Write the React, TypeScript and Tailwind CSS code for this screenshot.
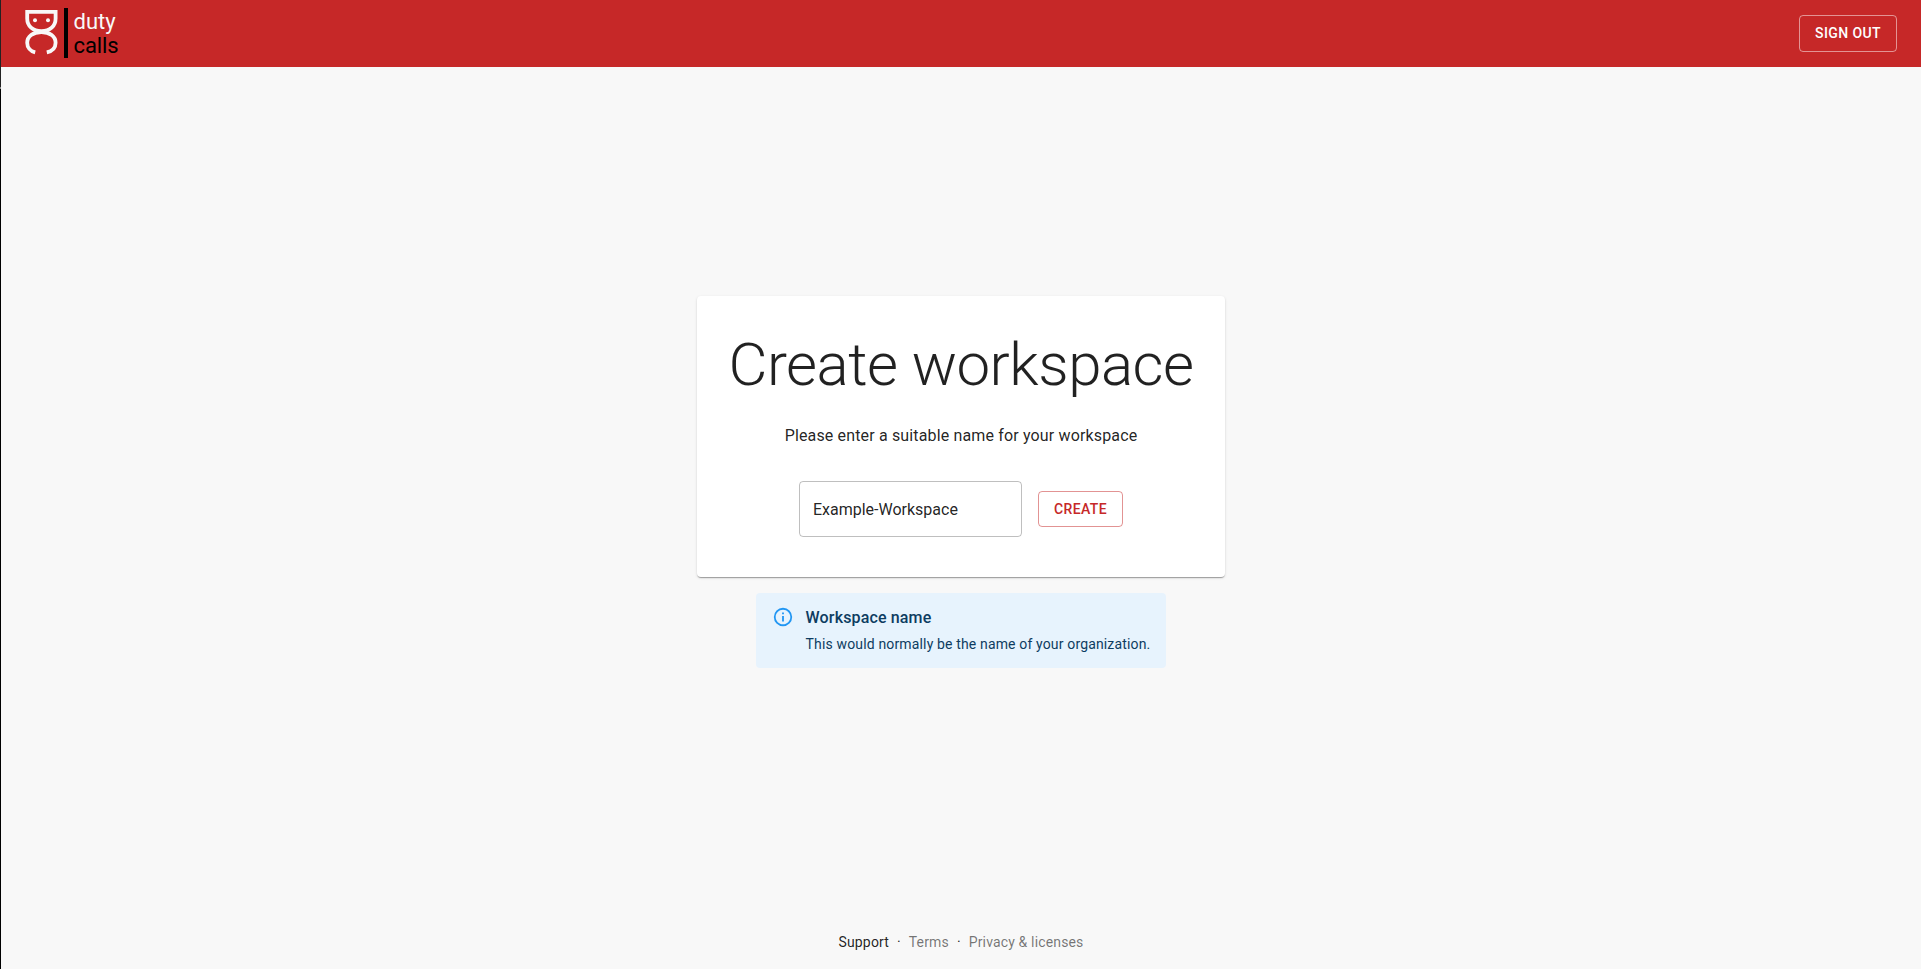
import React from "react";

function Logo() {
  return (
    <div className="flex items-start">
      <svg width="33" height="46" viewBox="0 0 33 46" fill="none" stroke="#f8f8f8" strokeWidth="3.8" aria-hidden="true">
        <path d="M2.2 1.9H30.6V8.5C30.6 16 25 21.2 16.4 21.2C7.8 21.2 2.2 16 2.2 8.5Z" />
        <path d="M10.2 42.3C5.2 41 2.2 37.2 2.2 32.7C2.2 26.5 8 22 16.4 22C24.8 22 30.6 26.5 30.6 32.7C30.6 37.2 27.6 41 21.8 42.3" />
        <circle cx="10" cy="10.3" r="2" fill="#f8f8f8" stroke="none" />
        <circle cx="23" cy="10.3" r="2" fill="#f8f8f8" stroke="none" />
      </svg>
      <div className="-mt-0.5 ml-1.5 h-[50px] w-1 bg-black" />
      <div className="ml-[5.5px] flex flex-col text-[22px] leading-6">
        <span className="text-[#f8f8f8]">duty</span>
        <span className="text-black tracking-[-0.005em]">calls</span>
      </div>
    </div>
  );
}

function InfoIcon() {
  return (
    <svg width="22" height="22" viewBox="0 0 24 24" fill="#2196f3" aria-hidden="true">
      <path d="M11,7H13V9H11V7M11,11H13V17H11V11M12,2A10,10 0 0,0 2,12A10,10 0 0,0 12,22A10,10 0 0,0 22,12A10,10 0 0,0 12,2M12,20C7.59,20 4,16.41 4,12C4,7.59 7.59,4 12,4C16.41,4 20,7.59 20,12C20,16.41 16.41,20 12,20Z" />
    </svg>
  );
}

const button =
  "rounded border px-[15px] py-[5px] text-sm font-medium uppercase leading-[24.5px] tracking-[0.02857em]";

export default function App() {
  return (
    <div className="flex h-[969px] w-[1921px] overflow-hidden bg-[#f8f8f8] font-['Roboto',sans-serif] text-black/87">
      <div className="flex w-px shrink-0 flex-col bg-black">
        <div className="h-[87px] bg-[#222222]" />
        <div className="h-0.5 bg-[#888888]" />
      </div>
      <div className="flex flex-1 flex-col">
        <header className="flex h-[67px] shrink-0 items-center justify-between bg-[#c62828] px-6">
          <Logo />
          <button className={`${button} border-white/50 text-white`}>Sign out</button>
        </header>
        <main className="flex flex-1 flex-col items-center pt-[229px]">
          <section className="flex h-[281px] w-[528px] flex-col items-center rounded bg-white pt-[33px] shadow-[0px_2px_1px_-1px_rgba(0,0,0,0.2),0px_1px_1px_0px_rgba(0,0,0,0.14),0px_1px_3px_0px_rgba(0,0,0,0.12)]">
            <h1 className="whitespace-nowrap text-[60px] font-light leading-[72px] tracking-[-0.00833em]">Create workspace</h1>
            <p className="mt-[23px] text-base tracking-[0.00938em]">Please enter a suitable name for your workspace</p>
            <form className="mt-[33px] flex items-center gap-4">
              <input
                className="h-14 w-[223px] rounded border border-black/25 px-[13px] text-base outline-none"
                defaultValue="Example-Workspace"
              />
              <button type="button" className={`${button} border-[#c62828]/50 text-[#c62828]`}>Create</button>
            </form>
          </section>
          <aside className="mt-4 flex rounded bg-[#e7f3fd] px-4 py-1.5 text-[#0d3c61]">
            <div className="mr-3 py-[7px]">
              <InfoIcon />
            </div>
            <div className="py-2">
              <h2 className="-mt-px mb-[3.8px] text-base font-medium tracking-[0.00938em]">Workspace name</h2>
              <p className="text-sm leading-5 tracking-[0.01071em]">This would normally be the name of your organization.</p>
            </div>
          </aside>
        </main>
        <footer className="flex justify-center pb-[17px] text-sm leading-5 tracking-[0.01071em]">
          <a>Support</a>
          <span className="mx-2">·</span>
          <a className="text-black/54">Terms</a>
          <span className="mx-2">·</span>
          <a className="text-black/54">Privacy &amp; licenses</a>
        </footer>
      </div>
    </div>
  );
}
